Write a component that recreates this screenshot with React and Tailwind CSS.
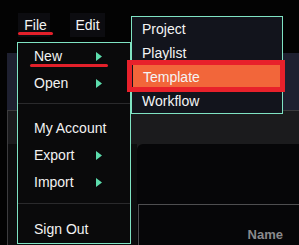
import React from 'react';

const teal = "border-[#7fe3c3]";

function Arrow() {
  return (
    <svg width="6" height="9" viewBox="0 0 6 9" className="shrink-0">
      <path d="M0 0 L6 4.5 L0 9 Z" fill="#5cdcac" />
    </svg>
  );
}

function MenuItem({ label, arrow }) {
  return (
    <div className="h-[27px] flex items-center pl-[16px] pr-[28px] text-[14px] text-[#f2f2f2]">
      <span className="w-[64px] whitespace-nowrap">{label}</span>
      {arrow && <Arrow />}
    </div>
  );
}

function SubItem({ label, active }) {
  return (
    <div
      className={
        "h-[24px] flex items-center pl-[10px] text-[14px] text-[#f4f4f4] " +
        (active ? "bg-[#f2663a] mx-[1px] pl-[9px]" : "")
      }
    >
      {label}
    </div>
  );
}

export default function App() {
  return (
    <div
      className="relative w-[299px] h-[245px] overflow-hidden bg-[#030303] flex flex-col"
      style={{ fontFamily: '"Liberation Sans", Arial, sans-serif' }}
    >
      {/* Top bar */}
      <div className="h-[53px] shrink-0 flex items-start pt-[13px] pl-[18px] gap-[20px] text-[14px] text-[#f4f4f4]">
        <div className="w-[32px] h-[24px] bg-[#0c0c10] flex items-center justify-center pl-[3px]">File</div>
        <div className="w-[35px] h-[24px] bg-[#0c0c10] flex items-center justify-center">Edit</div>
      </div>

      {/* Background content */}
      <div className="pl-[7px] flex-1 flex flex-col">
        <div className="h-[57px] bg-[#1e2030]" />
        <div className="flex-1 border-l border-t border-[#3c3c3e] flex flex-col">
          <div className="h-[33px] bg-[#1b1b1d]" />
          <div className="flex-1 flex bg-[#1b1b1d]">
            <div className="w-[129px] bg-[#0d0d0e]" />
            <div className="flex-1 bg-[#060608] rounded-tl-[6px] pt-[60px] pl-[1px]">
              <div className="h-full border-l border-t border-[#4e4e50] flex justify-end pr-[16px] pt-[20px]">
                <span className="text-[13px] font-bold text-[#8a8a8c]">Name</span>
              </div>
            </div>
          </div>
        </div>
      </div>

      {/* File menu */}
      <div className={"absolute left-[17px] top-[42px] w-[114px] h-[202px] border bg-[#0a0a0b] " + teal}>
        <div className="pb-[6px]">
          <MenuItem label="New" arrow />
          <MenuItem label="Open" arrow />
        </div>
        <div className="border-t border-[#2a2a2c] pt-[11px] pb-[7px]">
          <MenuItem label="My Account" />
          <MenuItem label="Export" arrow />
          <MenuItem label="Import" arrow />
        </div>
        <div className="border-t border-[#2a2a2c] pt-[12px]">
          <MenuItem label="Sign Out" />
        </div>
      </div>

      {/* New submenu */}
      <div className={"absolute left-[131px] top-[16px] w-[152px] h-[98px] border bg-[#12141c] " + teal}>
        <SubItem label="Project" />
        <SubItem label="Playlist" />
        <SubItem label="Template" active />
        <SubItem label="Workflow" />
      </div>

      {/* Annotations */}
      <div className="absolute left-[127px] top-[60px] w-[158px] h-[32px] border-[5px] border-[#e8212b]" />
      <div className="absolute left-[18px] top-[32px] w-[35px] h-[3px] rounded-full bg-[#e3202a]" />
      <div className="absolute left-[30px] top-[64px] w-[78px] h-[3px] rounded-full bg-[#e3202a]" />
    </div>
  );
}
